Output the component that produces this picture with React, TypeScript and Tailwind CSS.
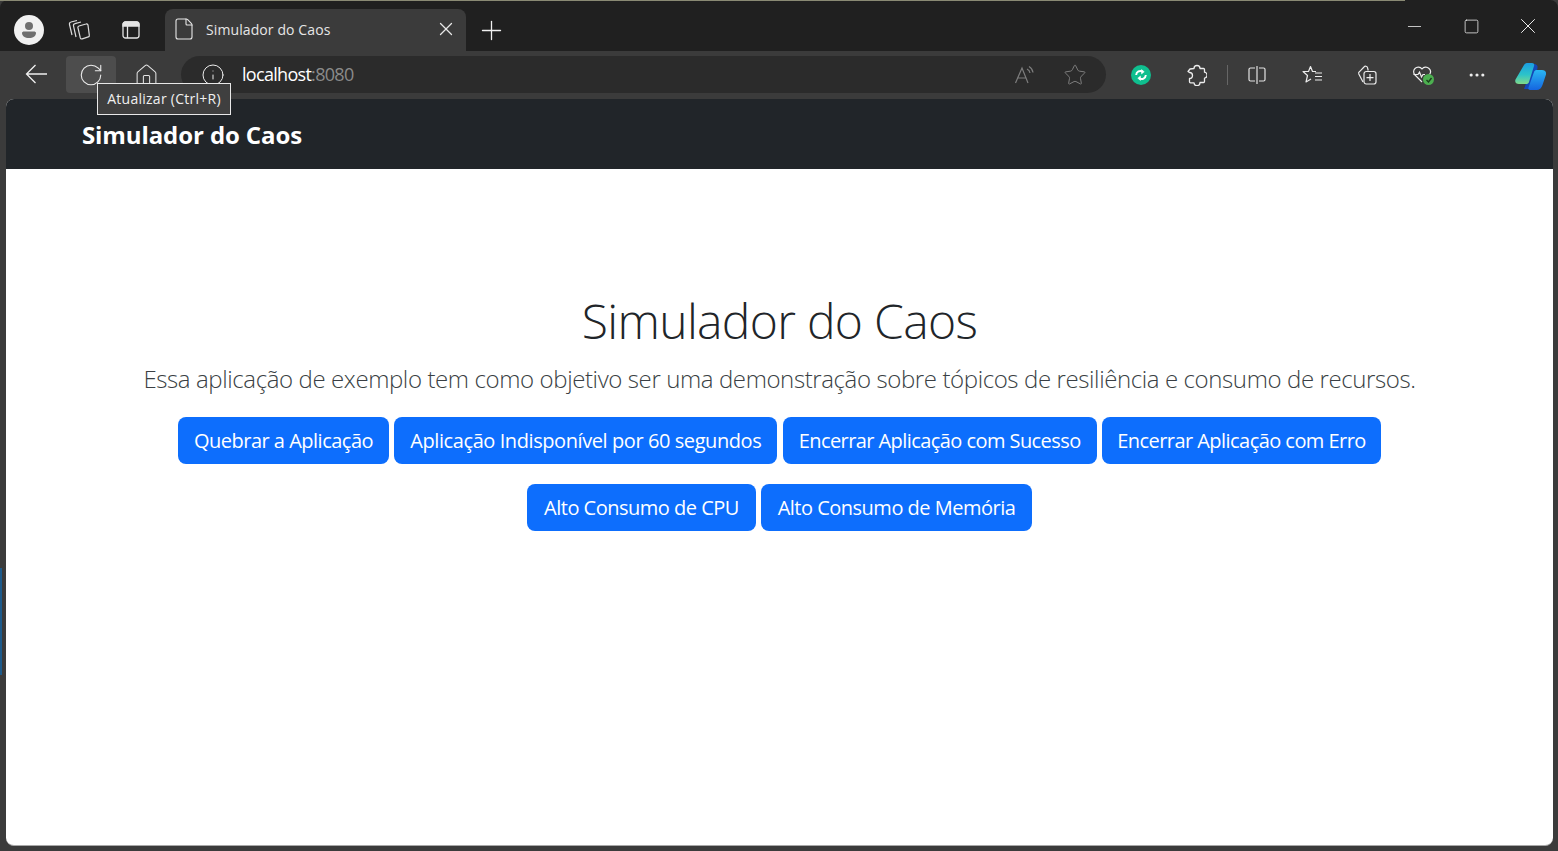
import { Plus, X, RotateCw, Home, Info, Star, MoreHorizontal, Minus, Square, File } from 'lucide-react';

const Extensions = () => (
  <svg width="20" height="22" viewBox="0 0 20 22" fill="none" stroke="#ececec" strokeWidth="1.300">
    <path d="M7 4.500a3 3 0 0 1 3-3 3 3 0 0 1 3 3h3.500a1 1 0 0 1 1 1v2.700a3 3 0 0 1 1 5.600 3 3 0 0 1-1 .4v3.300a1 1 0 0 1-1 1H13a3 3 0 0 1-6 .3H3.500a1 1 0 0 1-1-1V14.500a3 3 0 0 0 0-6L1 7.500 3 5l4-.5z" strokeLinejoin="round" />
  </svg>
);

const Workspaces = () => (
  <svg width="22" height="22" viewBox="0 0 22 22" fill="none" stroke="#dcdcdc" strokeWidth="1.200">
    <path d="M9 1.500 3 3a2 2 0 0 0-1.500 2.500L4 16" />
    <path d="M13 3 7 4.700A2 2 0 0 0 5.500 7L8 18" />
    <path d="m11 7 7-2a1.500 1.500 0 0 1 2 1.200l1.300 10a1.500 1.500 0 0 1-1 1.700l-6 2a1.500 1.500 0 0 1-2-1L10 9a1.500 1.500 0 0 1 1-2z" />
  </svg>
);

const VerticalTabs = () => (
  <svg width="18" height="18" viewBox="0 0 18 18" fill="none" stroke="#e4e4e4" strokeWidth="1.300">
    <path d="M1 5V3.500A2.500 2.500 0 0 1 3.500 1h11A2.500 2.500 0 0 1 17 3.500V5z" fill="#e4e4e4" />
    <rect x="1" y="1" width="16" height="16" rx="2.500" />
    <path d="M5.500 5v12" />
  </svg>
);

const BackArrow = () => (
  <svg width="22" height="20" viewBox="0 0 22 20" fill="none" stroke="#f0f0f0" strokeWidth="1.300">
    <path d="M1.500 10H22M10.500 1l-9 9 9 9" />
  </svg>
);

const ReadAloud = () => (
  <svg width="22" height="20" viewBox="0 0 22 20" fill="none" stroke="#7d7d7d" strokeWidth="1.200">
    <path d="M1.500 18 8 3l6 15M4 13h8" />
    <path d="M13 4a5 5 0 0 1 3 4M15 1.500a8 8 0 0 1 4 6" />
  </svg>
);

const SplitScreen = () => (
  <svg width="20" height="20" viewBox="0 0 20 20" fill="none" stroke="#e4e4e4" strokeWidth="1.200">
    <path d="M8 3H3.500A1.500 1.500 0 0 0 2 4.500v10A1.500 1.500 0 0 0 3.500 16H8M12 3h4.500A1.500 1.500 0 0 1 18 4.500v10a1.500 1.500 0 0 1-1.500 1.500H12" />
    <path d="M10 1v18" />
  </svg>
);

const Favorites = () => (
  <svg width="21" height="20" viewBox="0 0 21 20" fill="none" stroke="#ececec" strokeWidth="1.200">
    <path d="M14 6.500h-3.500l-2-5-2 5H1l4.500 4-1.500 6.500 5-3" strokeLinejoin="round" />
    <path d="M13 8h7M13 11.500h7M13 15h7" />
  </svg>
);

const Collections = () => (
  <svg width="20" height="20" viewBox="0 0 20 20" fill="none" stroke="#ececec" strokeWidth="1.200">
    <path d="M6 17 1.800 9a2 2 0 0 1 .8-2.400L7 2a2 2 0 0 1 3.500.7l.7 2.800" />
    <rect x="7" y="6.500" width="12" height="12.500" rx="2.200" />
    <path d="M13 9v7M9.500 12.700h7" />
  </svg>
);

const Health = () => (
  <div className="relative h-5 w-6">
    <svg width="20" height="20" viewBox="0 0 20 20" fill="none" stroke="#ececec" strokeWidth="1.200">
      <path d="M10 17 3 10a4.500 4.500 0 0 1 0-6.500 4.700 4.700 0 0 1 7 .5 4.700 4.700 0 0 1 7-.5 4.500 4.500 0 0 1 .5 6" />
      <path d="M1.500 9.500H6l1.500-2.500 2 5 1.500-2.500h2" />
    </svg>
    <div className="absolute left-[11px] top-[9px] flex h-[11px] w-[11px] items-center justify-center rounded-full bg-[#4caf50]">
      <svg width="8" height="8" viewBox="0 0 8 8" fill="none" stroke="#1c3d1c" strokeWidth="1.400">
        <path d="m1.500 4 2 2 3-4" />
      </svg>
    </div>
  </div>
);

const Copilot = () => (
  <svg width="31" height="27" viewBox="0 0 31 27">
    <defs>
      <linearGradient id="cpa" x1="0" y1="0" x2="0" y2="1">
        <stop offset="0" stopColor="#1b9de2" />
        <stop offset="0.55" stopColor="#2cc3c9" />
        <stop offset="1" stopColor="#7fd98a" />
      </linearGradient>
      <linearGradient id="cpb" x1="0" y1="0" x2="0" y2="1">
        <stop offset="0" stopColor="#2ab7f3" />
        <stop offset="1" stopColor="#1565e0" />
      </linearGradient>
    </defs>
    <path d="M18 1c4 0 5 2 4.500 4L19 23c-1 3-3 3-4 3H9z" fill="#1447b8" />
    <path d="M9 2c.5-1 1.500-2 3-2h5c2 0 2.500 1.500 2 3l-5 16c-.5 1.500-1.500 2-3 2H4c-3 0-4.500-2-3.500-4.500z" fill="url(#cpa)" />
    <path d="M15 27c-1.500 0-2-1-1.500-2.500L19 9c.5-1.500 1.500-2 3-2h5c3 0 4.500 2 4 4.500L27.500 22c-1 3-3 5-6 5z" fill="url(#cpb)" />
  </svg>
);

const SyncBadge = () => (
  <div className="flex h-[20px] w-[20px] items-center justify-center rounded-full bg-[#0fbf8f]">
    <svg width="14" height="14" viewBox="0 0 13 13" fill="none" stroke="#fff" strokeWidth="1.800">
      <path d="M2 6.500a4 4 0 0 1 6-3.200" />
      <path d="M11 6.500a4 4 0 0 1-6 3.200" />
      <path d="M7 1.500 9.500 3.500 7 5.500z" fill="#fff" strokeWidth="0.500" />
      <path d="M6 7.500 3.500 9.500 6 11.500z" fill="#fff" strokeWidth="0.500" />
    </svg>
  </div>
);

const ActionButton = ({ label, className }: { label: string; className: string }) => (
  <button className={`flex h-[47px] items-center justify-center whitespace-nowrap rounded-lg bg-[#0d6efd] text-[20px] text-white ${className}`}>
    {label}
  </button>
);

export default function App() {
  return (
    <div className="relative flex h-[851px] w-[1558px] flex-col overflow-hidden bg-[#3b3b3b] font-['Open_Sans','Noto_Sans',sans-serif]">
      {/* Title bar */}
      <div className="flex h-[51px] shrink-0 items-end rounded-t-lg bg-[#202020] pl-[14px]">
        <div className="mb-[6px] flex h-[30px] w-[30px] items-center justify-center rounded-full bg-[#f1f1f1]">
          <svg width="20" height="20" viewBox="0 0 20 20" fill="#6f6f6f">
            <circle cx="10" cy="6" r="4" />
            <path d="M3 13c0-1 1-1.500 2-1.500h10c1 0 2 .5 2 1.500 0 3-3 5-7 5s-7-2-7-5z" />
          </svg>
        </div>
        <div className="mb-[10px] ml-[24px]"><Workspaces /></div>
        <div className="mb-[12px] ml-[32px]"><VerticalTabs /></div>
        <div className="ml-[25px] flex h-[42px] w-[301px] items-center rounded-t-lg bg-[#3b3b3b] pb-[2px] pl-[7px] pr-[9px]">
          <File size={24} strokeWidth={1.1} color="#e8e8e8" />
          <span className="ml-[10px] flex-1 text-[14px] tracking-[0.1px] text-[#e6e6e6]">Simulador do Caos</span>
          <X size={22} strokeWidth={1.4} color="#e8e8e8" />
        </div>
        <div className="mb-[5px] ml-[10px]"><Plus size={31} strokeWidth={1} color="#f0f0f0" /></div>
        <div className="mb-[12px] ml-auto flex items-center pr-[17px]">
          <Minus size={21} strokeWidth={0.9} color="#f0f0f0" />
          <div className="ml-[38px]"><Square size={17} strokeWidth={1.1} color="#f0f0f0" /></div>
          <div className="ml-[35px]"><X size={26} strokeWidth={0.9} color="#f0f0f0" /></div>
        </div>
      </div>

      {/* Toolbar */}
      <div className="flex h-[48px] shrink-0 items-start pt-[5px]">
        <div className="ml-[25px] mt-[8px]"><BackArrow /></div>
        <div className="ml-[19px] flex h-[37px] w-[50px] items-center justify-center rounded bg-[#4d4d4d]">
          <RotateCw size={26} strokeWidth={1} color="#ececec" />
        </div>
        <div className="ml-[18px] mt-[7px]"><Home size={25} strokeWidth={1} color="#e4e4e4" /></div>
        <div className="ml-[22px] flex h-[37px] w-[925px] items-center rounded-full bg-[#2b2b2b] pl-[20px]">
          <Info size={24} strokeWidth={1} color="#ececec" />
          <span className="ml-[17px] text-[18px] tracking-[-0.7px] text-white">localhost<span className="text-[#8a8a8a]">:8080</span></span>
          <div className="ml-auto mr-[19px] flex items-center gap-[27px]">
            <ReadAloud />
            <Star size={24} strokeWidth={1} color="#7d7d7d" />
          </div>
        </div>
        <div className="ml-[25px] mt-[9px]"><SyncBadge /></div>
        <div className="ml-[36px] mt-[8px]"><Extensions /></div>
        <div className="ml-[20px] mt-[9px] h-[20px] w-[1px] bg-[#666666]" />
        <div className="ml-[19px] mt-[9px]"><SplitScreen /></div>
        <div className="ml-[35px] mt-[9px]"><Favorites /></div>
        <div className="ml-[34px] mt-[9px]"><Collections /></div>
        <div className="ml-[35px] mt-[9px]"><Health /></div>
        <div className="ml-[31px] mt-[9px]"><MoreHorizontal size={20} strokeWidth={1.8} color="#ececec" /></div>
        <div className="ml-[28px] mt-[7px]"><Copilot /></div>
      </div>

      {/* Page */}
      <div className="mx-[6px] flex h-[747px] w-[1547px] shrink-0 flex-col overflow-hidden rounded-lg border-b border-[#a8a8a8] bg-white">
        <nav className="flex h-[70px] shrink-0 items-center bg-[#212529] pl-[76px]">
          <span className="mt-[2px] text-[24px] font-bold tracking-[-0.1px] text-white">Simulador do Caos</span>
        </nav>
        <main className="flex flex-col items-center pt-[118px]">
          <h1 className="text-[48px] font-light leading-[68px] tracking-[-0.68px] text-[#212529]">Simulador do Caos</h1>
          <p className="mt-[6px] text-[24px] font-light leading-[36px] tracking-[-0.39px] text-[#3a3f44]">
            Essa aplicação de exemplo tem como objetivo ser uma demonstração sobre tópicos de resiliência e consumo de recursos.
          </p>
          <div className="mt-[20px] flex gap-[5.33px]">
            <ActionButton label="Quebrar a Aplicação" className="w-[211px] tracking-[-0.5px]" />
            <ActionButton label="Aplicação Indisponível por 60 segundos" className="w-[383px] tracking-[-0.42px]" />
            <ActionButton label="Encerrar Aplicação com Sucesso" className="w-[314px] tracking-[-0.57px]" />
            <ActionButton label="Encerrar Aplicação com Erro" className="w-[279px] tracking-[-0.55px]" />
          </div>
          <div className="mt-[20px] flex gap-[5px]">
            <ActionButton label="Alto Consumo de CPU" className="w-[229px] tracking-[-0.5px]" />
            <ActionButton label="Alto Consumo de Memória" className="w-[271px] tracking-[-0.5px]" />
          </div>
        </main>
      </div>

      {/* Tooltip */}
      <div className="absolute left-[97px] top-[83px] flex h-[32px] w-[134px] items-center justify-center border border-[#e8e8e8] bg-[#3f3f3f] pb-[2px] text-[14px] tracking-[0.26px] text-[#f0f0f0]">
        Atualizar (Ctrl+R)
      </div>

      {/* Bits of the desktop showing round the window */}
      <div className="absolute left-0 top-[568px] h-[107px] w-[2px] bg-[#1d5a8a]" />
      <div className="absolute left-0 top-0 h-[1px] w-[1405px] bg-[#8a8a74]" />
    </div>
  );
}
